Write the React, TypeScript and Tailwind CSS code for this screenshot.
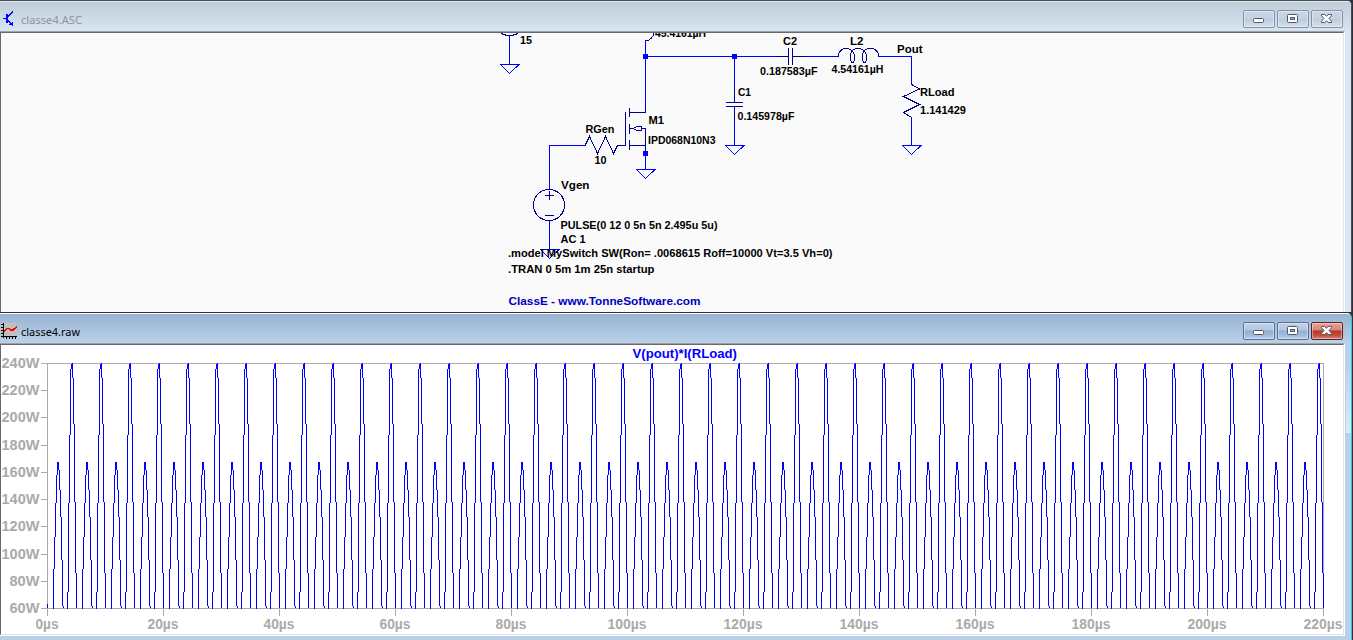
import React from 'react';

type Label = { x: number; y: number; w: number; text: string; blue?: boolean };

const labels: Label[] = [
  { x: 520, y: 44, w: 12, text: '15' },
  { x: 655, y: 36.5, w: 51, text: '45.4161µH' },
  { x: 783, y: 45, w: 14, text: 'C2' },
  { x: 850, y: 45, w: 13.5, text: 'L2' },
  { x: 897, y: 53, w: 25.5, text: 'Pout' },
  { x: 760, y: 75, w: 57.5, text: '0.187583µF' },
  { x: 831.5, y: 73, w: 52, text: '4.54161µH' },
  { x: 738, y: 96, w: 13, text: 'C1' },
  { x: 737.5, y: 120, w: 57, text: '0.145978µF' },
  { x: 920, y: 96, w: 34.5, text: 'RLoad' },
  { x: 920, y: 114, w: 46, text: '1.141429' },
  { x: 648.5, y: 124, w: 15.5, text: 'M1' },
  { x: 648, y: 144, w: 67.5, text: 'IPD068N10N3' },
  { x: 585.5, y: 133, w: 29, text: 'RGen' },
  { x: 594.5, y: 164, w: 12, text: '10' },
  { x: 561, y: 189, w: 28.5, text: 'Vgen' },
  { x: 560.5, y: 229, w: 157, text: 'PULSE(0 12 0 5n 5n 2.495u 5u)' },
  { x: 560.5, y: 243, w: 25, text: 'AC 1' },
  { x: 508, y: 257, w: 324.5, text: '.model MySwitch SW(Ron= .0068615 Roff=10000 Vt=3.5 Vh=0)' },
  { x: 508, y: 273, w: 146.5, text: '.TRAN 0 5m 1m 25n startup' },
  { x: 508.5, y: 305, w: 192, text: 'ClassE - www.TonneSoftware.com', blue: true },
];

const grounds: [number, number][] = [
  [509, 64],
  [645, 169],
  [734, 145],
  [911, 145],
  [549, 249],
];

const FONT = 'font-[Liberation_Sans,Arial,sans-serif]';

function Schematic() {
  return (
    <svg className="block shrink-0" width="1342" height="279" viewBox="1 33 1342 279" fill="none">
      <g shapeRendering="crispEdges" strokeWidth="1">
        <g stroke="#0000ff">
          <path d="M509.5 36V64M645.5 40V109M645 56.5H775M806 56.5H838M734.5 57V90M734.5 120V145M911.5 56V84M879 56.5H912M911.5 117V145M549.5 145V189M549 145.5H585M549.5 221V249M645.5 154V169" />
          {grounds.map(([x, y]) => (
            <path key={x} d={`M${x - 9} ${y + 0.5}H${x + 10}L${x + 0.5} ${y + 9.5}L${x - 8.5} ${y + 0.5}`} />
          ))}
        </g>
        <g stroke="#000090">
          <path d="M501 33.5L504 34.5L507 35.5H512L515 34.5L518 33.5" />
          <path d="M645.5 40.5H648L651 38.5L653 36L653.5 33" />
          <path d="M775 56.5H789M793 56.5H806M788.5 48V65M792.5 48V65" />
          <path d="M734.5 90V102M734.5 107V120M726 102.5H743M726 106.5H743" />
          <path d="M625.5 112V146M629.5 108V117M629.5 124V134M629.5 140V150M629 112.5H646M645.5 108V113M629 145.5H646M645.5 128V154M630 128.5H634M634 127.5L638 126.5H641V130.5H638L634 129.5M641 128.5H646" />
          <path d="M585 145.5L589.5 136.5L597.5 153.5L605.5 136.5L613.5 153.5L617.5 145.5H625" />
          <path d="M911.5 84.5L919.5 89L903.5 96.5L919.5 104.5L903.5 112.5L911.5 117.5" />
          <path d="M838.5 57C838.5 51 842 48.5 846.5 48.5C852 48.5 854.5 53 854.5 57C854.5 60 854 62.5 852.5 62.5C851 62.5 850.5 60 850.5 56C850.5 52 853 48.5 858.5 48.5C864 48.5 866.5 53 866.5 57C866.5 60 866 62.5 864.5 62.5C863 62.5 862.5 60 862.5 56C862.5 52 865 48.5 870.5 48.5C875 48.5 878.5 51 878.5 57" />
          <circle cx="549" cy="205" r="15.5" />
          <path d="M545 195.5H554M549.5 191V200M545 215.5H554" />
        </g>
        <g fill="#0000ff">
          <rect x="643" y="54" width="5" height="5" />
          <rect x="732" y="54" width="5" height="5" />
          <rect x="643" y="151" width="5" height="5" />
        </g>
      </g>
      <g className={FONT} fontSize="11" fontWeight="700">
        {labels.map((l) => (
          <text key={l.text} x={l.x} y={l.y} textLength={l.w} lengthAdjust="spacingAndGlyphs" fill={l.blue ? '#0000c0' : '#000'}>
            {l.text}
          </text>
        ))}
      </g>
    </svg>
  );
}

// One 5 µs cycle of load power: [column offset, top, bottom]
const cycle: [number, number, number][] = [
  [6, 569, 609], [7, 537, 569], [8, 503, 537], [9, 475, 503], [10, 462, 475],
  [11, 462, 470], [12, 470, 490], [13, 490, 517], [14, 517, 560], [15, 560, 606],
  [16, 606, 608], [20, 592, 609], [21, 503, 592], [22, 435, 503], [23, 369, 435],
  [24, 364, 369], [25, 363, 378], [26, 378, 424], [27, 424, 502], [28, 502, 573],
  [29, 573, 608],
];

const trace =
  'M47.5 604V608' +
  Array.from({ length: 44 }, (_, i) =>
    cycle.map(([dx, a, b]) => `M${47.5 + i * 29 + dx} ${a}V${b}`).join(''),
  ).join('');

const yTicks = [363, 390, 417, 445, 472, 499, 526, 554, 581, 608];

function Plot() {
  return (
    <svg className="block shrink-0" width="1342" height="289" viewBox="1 345 1342 289" fill="none">
      <g shapeRendering="crispEdges" strokeWidth="1">
        <path
          stroke="#aaaaaa"
          d={'M47 363.5H1324M47 608.5H1324M47.5 363V615M1323.5 363V615' + yTicks.map((y) => `M41 ${y + 0.5}H47`).join('') + Array.from({ length: 12 }, (_, i) => `M${47.5 + i * 116} 608V616`).join('')}
        />
        <path stroke="#0000ff" d={trace} />
      </g>
      <g className={FONT} fontWeight="700" fontSize="14" fill="#aaaaaa">
        {yTicks.map((y, i) => (
          <text key={y} x="39.5" y={y + 5} textAnchor="end" textLength={i > 7 ? 30 : 38} lengthAdjust="spacingAndGlyphs">
            {240 - i * 20}W
          </text>
        ))}
        {Array.from({ length: 12 }, (_, i) => (
          <text key={i} x={47 + i * 116} y="629" textAnchor="middle" textLength={i === 0 ? 23 : i < 5 ? 31 : 39} lengthAdjust="spacingAndGlyphs">
            {i * 20}µs
          </text>
        ))}
      </g>
      <text className={FONT} x="632.5" y="358" fontSize="13" fontWeight="700" textLength="104.5" lengthAdjust="spacingAndGlyphs" fill="#0000ff">
        V(pout)*I(RLoad)
      </text>
    </svg>
  );
}

const glyphs = {
  min: (
    <rect x="10.5" y="8.5" width="10" height="4" rx="1" fill="#fff" stroke="#50566a" />
  ),
  max: (
    <>
      <rect x="10.5" y="4.5" width="10" height="8" rx="1" fill="#fff" stroke="#50566a" />
      <rect x="13.5" y="7.5" width="4" height="2" fill="#a9bdd5" stroke="#50566a" />
    </>
  ),
  close: (
    <path
      d="M10.5 4.5H13.8L15.5 6.3L17.2 4.5H20.5V5.8L18 8.5L20.5 11.2V12.5H17.2L15.5 10.7L13.8 12.5H10.5V11.2L13 8.5L10.5 5.8Z"
      fill="#fff"
      stroke="#50566a"
    />
  ),
};

function Caption({ kind, active }: { kind: keyof typeof glyphs; active: boolean }) {
  const skin = !active
    ? 'border-[#8391ad] bg-[linear-gradient(#c8d5e3_0%,#c5d2e1_48%,#bccbdc_50%,#d3e0ed_100%)]'
    : kind === 'close'
      ? 'border-[#57202b] bg-[linear-gradient(#e6a093_0%,#d9877a_45%,#b83a24_48%,#c04b35_75%,#d5867a_100%)]'
      : 'border-[#5d6d8f] bg-[linear-gradient(#bfd2e8_0%,#b3c8e0_45%,#92aed0_48%,#a0bbd9_75%,#b8d0ea_100%)]';
  return (
    <button className={`block h-[18px] w-8 rounded-[2px] border shadow-[inset_0_0_0_1px_rgba(255,255,255,0.4)] ${skin}`}>
      <svg className="block" width="30" height="16" viewBox="1 1 30 16">
        {glyphs[kind]}
      </svg>
    </button>
  );
}

function TransistorIcon() {
  return (
    <svg width="16" height="17" viewBox="0 10 16 17" fill="none" stroke="#0000ff" shapeRendering="crispEdges">
      <path d="M3 18.5H6" />
      <path d="M7 14V23" strokeWidth="2" />
      <path d="M8 16.5L13 11.5M8 20.5L13 26" strokeWidth="1.2" />
      <path d="M10 24.5H13M12.5 22V26M9 24.5H13" />
    </svg>
  );
}

function PlotIcon() {
  return (
    <svg width="17" height="17" viewBox="0 322 17 17" fill="none" shapeRendering="crispEdges">
      <rect x="1" y="323" width="16" height="15" fill="#c0c0c0" />
      <path d="M3.5 323V338M1 336.5H17M1 324.5H4M1 327.5H4M1 330.5H4M1 333.5H4M6.5 336V339M9.5 336V339M12.5 336V339M15.5 336V339" stroke="#000" />
      <path d="M4 331.5L7 328.5H9L11 330H13L17 326.5" stroke="#ff0000" strokeWidth="1.6" />
    </svg>
  );
}

function TitleBar({ title, active, icon }: { title: string; active: boolean; icon: React.ReactNode }) {
  return (
    <div className="flex h-full items-start justify-between pr-2">
      <div className="flex h-full items-center pt-1">
        <span className="block w-[21px]">{icon}</span>
        <svg width="80" height="18" className="block">
          <text x="0" y="13.5" fontSize="11.5" textLength={active ? 59 : 61} lengthAdjust="spacingAndGlyphs" className="font-[Noto_Sans,sans-serif]" fill={active ? '#000' : '#8f9296'}>
            {title}
          </text>
        </svg>
      </div>
      <div className="flex gap-0.5 pt-2">
        <Caption kind="min" active={active} />
        <Caption kind="max" active={active} />
        <Caption kind="close" active={active} />
      </div>
    </div>
  );
}

export default function App() {
  return (
    <div className="flex h-[640px] w-[1353px] flex-col overflow-hidden bg-[#303038]">
      <section className="flex h-[312px] w-[1352px] flex-col overflow-hidden rounded-tr-[5px] border-r border-t border-[#4a4a50] bg-[#d8e5f2]">
        <div className="h-[30px] shrink-0 border-t border-[#e4ebf2] bg-[linear-gradient(#bfcddb,#d7e4f1)]">
          <TitleBar title="classe4.ASC" active={false} icon={<TransistorIcon />} />
        </div>
        <div className="w-[1345px] grow overflow-hidden border-r border-t border-r-white border-t-[#a0a0a0]">
          <div className="h-[280px] overflow-hidden border-l border-r border-t border-l-[#696969] border-r-[#e3e3e3] border-t-[#696969] bg-[#fafafa]">
            <Schematic />
          </div>
        </div>
      </section>
      <section className="mt-px flex h-[327px] w-[1352px] flex-col overflow-hidden rounded-tr-[5px] border-r border-t border-r-[#24c9e8] border-t-white bg-[#bad0e9]">
        <div className="h-[29px] shrink-0 bg-[linear-gradient(#99b4d1,#b9d1ea)]">
          <TitleBar title="classe4.raw" active icon={<PlotIcon />} />
        </div>
        <div className="flex grow">
          <div className="h-[293px] w-[1345px] border-b border-r border-t border-b-white border-r-white border-t-[#a0a0a0]">
            <div className="h-[291px] overflow-hidden border border-b-[#e3e3e3] border-l-[#696969] border-r-[#e3e3e3] border-t-[#696969] bg-white">
              <Plot />
            </div>
          </div>
          <div className="ml-px h-[90px] w-[5px] bg-[linear-gradient(#bad0e9,#bad0e9_20%,#dfeaf6)]" />
        </div>
      </section>
    </div>
  );
}
